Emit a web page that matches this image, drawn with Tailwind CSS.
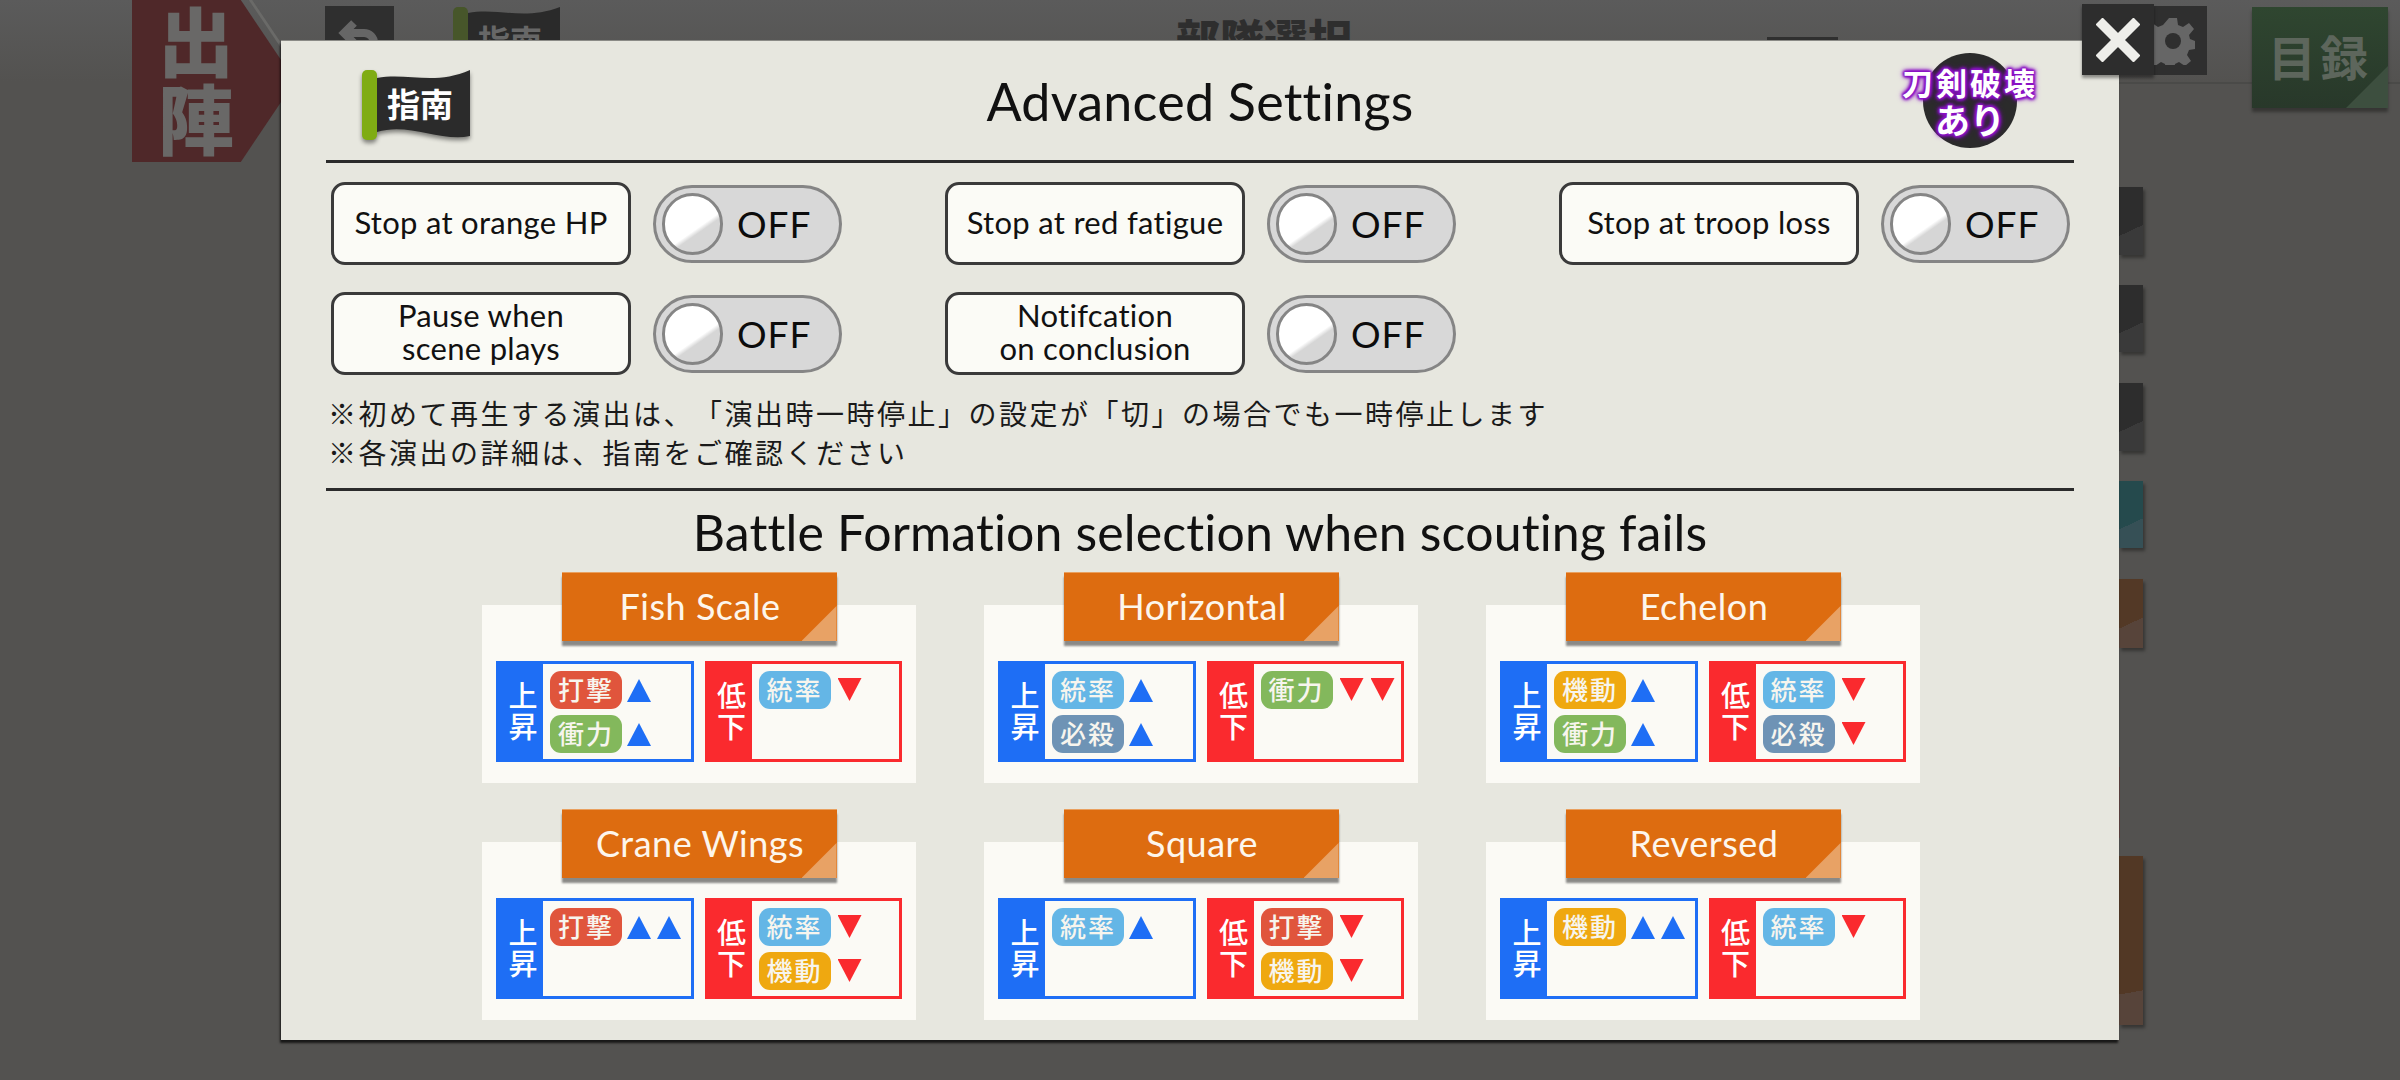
<!DOCTYPE html>
<html lang="ja">
<head>
  <meta charset="UTF-8" />
  <title>Advanced Settings</title>
  <script src="https://cdn.jsdelivr.net/npm/@tailwindcss/browser@4"></script>
</head>
<body class="bg-[#535250] font-['Lato','Noto_Sans_CJK_JP',sans-serif] overflow-hidden">
  <div class="relative w-[2400px] h-[1080px] overflow-hidden">

    <!-- dimmed screen behind the dialog -->
    <div class="h-[82px] bg-[linear-gradient(#5b5b5b,#535250)]">
      <div class="flex items-start pl-[132px]">
        <div class="relative w-[170px] h-[162px] shrink-0">
          <div class="absolute left-[8px] top-0 w-[170px] h-[162px] bg-[#6a6a68] [clip-path:polygon(64%_0,66%_0,98%_50%,96%_50%)]"></div>
          <div class="relative w-[170px] h-[162px] bg-[#4f2829] [clip-path:polygon(0_0,64%_0,96%_50%,64%_100%,0_100%)] pl-[22px] pt-[4px] text-[#696867] text-[76px] leading-[76px] tracking-[2px] font-black"><span class="block w-[76px] [writing-mode:vertical-rl]">出陣</span></div>
        </div>
        <div class="ml-[23px] mt-[6px] w-[69px] h-[69px] shrink-0 bg-[#2f2f2f] flex items-center justify-center">
          <svg width="44" height="44" viewBox="0 0 44 44" fill="none" stroke="#666" stroke-width="8"><path d="M8 14h18a10 10 0 0 1 0 20h-8"/><path d="M16 4L6 14l10 10"/></svg>
        </div>
        <div class="relative ml-[59px] mt-[7px] w-[107px] h-[72px] shrink-0">
          <svg class="block" width="107" height="72" viewBox="0 0 107 72"><rect x="0" y="0" width="15" height="70" rx="5" fill="#47562a"/><path d="M15 6C45 0 70 14 107 0V66C75 72 45 54 15 62Z" fill="#2a2a2a"/></svg>
          <span class="absolute left-[25px] top-[14px] text-[32px] leading-[40px] font-bold text-[#676767] whitespace-nowrap">指南</span>
        </div>
        <div class="ml-[616px] mt-[14px] w-[180px] shrink-0 text-[44px] leading-[52px] font-black text-[#2e2e2e] whitespace-nowrap">部隊選択</div>
        <div class="ml-[411px] mt-[37px] w-[71px] h-[30px] shrink-0 bg-[#2f2f2f]"></div>
        <div class="ml-[301px] mt-[6px] w-[68px] h-[69px] shrink-0 bg-[#2f2f2f] flex items-center justify-center">
          <svg width="44" height="48" viewBox="0 0 44 48" fill="#666"><path d="M18 1h8l1 7 5 2 6-4 5 6-5 6 1 4 5 2v8l-6 1-2 5 4 6-6 5-6-4-4 2-1 7h-8l-1-7-4-2-6 4-6-5 4-6-2-5-6-1v-8l6-2 1-4-5-6 5-6 6 4 5-2z"/><circle cx="22" cy="24" r="8" fill="#2f2f2f"/></svg>
        </div>
        <div class="relative ml-[45px] mt-[7px] w-[136px] h-[101px] shrink-0 bg-[linear-gradient(#2f4630,#28382a)] shadow-[0_4px_3px_rgba(0,0,0,0.35)] flex items-center justify-center text-[48px] leading-[56px] font-bold text-[#5d665c] tracking-[4px]">
          目録
          <div class="absolute right-0 bottom-0 w-[42px] h-[42px] bg-[#3d4f3f] [clip-path:polygon(100%_0,100%_100%,0_100%)]"></div>
        </div>
      </div>
    </div>
    <div class="ml-[2119px] h-[2px] bg-[#4a4a48]"></div>
    <div class="flex flex-col items-end pr-[257px] pt-[103px]">
      <div class="w-[24px] h-[68px] mb-[30px] bg-[linear-gradient(155deg,#2d2d2d_62%,#3a3a3a_62%)] shadow-[2px_3px_3px_rgba(0,0,0,0.35)]"></div>
      <div class="w-[24px] h-[67px] mb-[31px] bg-[linear-gradient(155deg,#2d2d2d_62%,#3a3a3a_62%)] shadow-[2px_3px_3px_rgba(0,0,0,0.35)]"></div>
      <div class="w-[24px] h-[68px] mb-[30px] bg-[linear-gradient(155deg,#2d2d2d_62%,#3a3a3a_62%)] shadow-[2px_3px_3px_rgba(0,0,0,0.35)]"></div>
      <div class="w-[24px] h-[67px] mb-[31px] bg-[linear-gradient(155deg,#254a4d_62%,#365056_62%)] shadow-[2px_3px_3px_rgba(0,0,0,0.35)]"></div>
      <div class="w-[24px] h-[69px] mb-[119px] bg-[linear-gradient(155deg,#533926_62%,#57443a_62%)] shadow-[2px_3px_3px_rgba(0,0,0,0.35)]"></div>
      <div class="mr-[23px] w-[1px] h-[71px] mb-[18px] bg-[#5c4341]"></div>
      <div class="w-[24px] h-[169px] bg-[linear-gradient(170deg,#523825_80%,#57443a_80%)] shadow-[2px_3px_3px_rgba(0,0,0,0.35)]"></div>
    </div>

    <!-- dialog -->
    <div class="absolute left-[281px] top-[40px] w-[1838px] h-[1000px] bg-[#e7e7df] shadow-[-1px_3px_2px_rgba(0,0,0,0.7)] border-t border-[#8b8b86] px-[45px]">
      <div class="relative h-[122px] border-b-[3px] border-[#2b2b2b] flex items-center justify-center">
        <div class="absolute left-[36px] top-[29px] w-[108px] h-[73px]">
          <svg class="block drop-shadow-[0_3px_2px_rgba(0,0,0,0.45)]" width="108" height="72" viewBox="0 0 108 72"><path d="M15 8C45 2 72 16 108 0V66C78 72 46 52 15 62Z" fill="#2b2b2b"/><rect x="0" y="0" width="15" height="70" rx="5" fill="#7fac14"/></svg>
          <span class="absolute left-[25px] top-[12px] text-[33px] leading-[44px] font-bold text-white whitespace-nowrap">指南</span>
        </div>
        <h1 class="text-[52px] leading-[60px] text-[#111] tracking-[0.25px]">Advanced Settings</h1>
        <div class="absolute left-[1575px] top-[12px] w-[138px] h-[95px] flex justify-center">
          <div class="w-[94px] h-[95px] rounded-full bg-[#2b2b2b]"></div>
          <div class="absolute inset-0 flex flex-col items-center justify-center text-white font-bold whitespace-nowrap [text-shadow:0_0_2px_#8a12c4,0_0_4px_#8a12c4,0_0_5px_#8a12c4,0_0_7px_#8a12c4,1px_1px_3px_#8a12c4,-1px_-1px_3px_#8a12c4,1px_-1px_3px_#8a12c4,-1px_1px_3px_#8a12c4]">
            <span class="text-[31px] leading-[38px] tracking-[3px]">刀剣破壊</span>
            <span class="text-[35px] leading-[36px]">あり</span>
          </div>
        </div>
      </div>

      <div id="settings" class="ml-[5px] mt-[19px] grid grid-cols-[repeat(3,614px)] gap-y-[27px]"></div>

      <div class="ml-[2px] mt-[20px] text-[28px] leading-[39px] tracking-[2.5px] text-[#1a1a1a] whitespace-nowrap [text-spacing-trim:space-all]">
        <p>※初めて再生する演出は、「演出時一時停止」の設定が「切」の場合でも一時停止します</p>
        <p>※各演出の詳細は、指南をご確認ください</p>
      </div>

      <div class="mt-[15px] border-b-[3px] border-[#2b2b2b]"></div>

      <h2 class="mt-[11px] h-[60px] text-center text-[50px] leading-[60px] text-[#111] tracking-[0.13px] whitespace-nowrap">Battle Formation selection when scouting fails</h2>

      <div id="formations" class="ml-[156px] mt-[10px] grid grid-cols-[repeat(3,434px)] gap-x-[68px] gap-y-[26px]"></div>
    </div>

    <!-- close button -->
    <div class="absolute left-[2082px] top-[4px] w-[72px] h-[71px] bg-[#2d2d2d] shadow-[0_3px_3px_rgba(0,0,0,0.4)] flex items-center justify-center">
      <svg width="44" height="44" viewBox="0 0 44 44" stroke="#eeeeea" stroke-width="10"><path d="M3 3L41 41M41 3L3 41"/></svg>
    </div>
  </div>

  <script>
    const settings = [
      ["Stop at orange HP"],
      ["Stop at red fatigue"],
      ["Stop at troop loss"],
      ["Pause when", "scene plays"],
      ["Notifcation", "on conclusion"],
    ];

    const statColors = {
      "打撃": "bg-[#e0553c]",
      "衝力": "bg-[#83b85c]",
      "統率": "bg-[#64b6e6]",
      "必殺": "bg-[#6e93b5]",
      "機動": "bg-[#efa810]",
    };

    const formations = [
      { name: "Fish Scale", up: [["打撃", 1], ["衝力", 1]], down: [["統率", 1]] },
      { name: "Horizontal", up: [["統率", 1], ["必殺", 1]], down: [["衝力", 2]] },
      { name: "Echelon", up: [["機動", 1], ["衝力", 1]], down: [["統率", 1], ["必殺", 1]] },
      { name: "Crane Wings", up: [["打撃", 2]], down: [["統率", 1], ["機動", 1]] },
      { name: "Square", up: [["統率", 1]], down: [["打撃", 1], ["機動", 1]] },
      { name: "Reversed", up: [["機動", 2]], down: [["統率", 1]] },
    ];

    document.getElementById("settings").innerHTML = settings.map(lines => `
      <div class="flex items-center gap-[22px]">
        <div class="w-[300px] h-[83px] pb-[3px] rounded-[14px] border-[3px] border-[#3a3a3a] bg-[#fbfbf6] flex items-center justify-center text-center text-[31px] leading-[33px] tracking-[0.3px] text-[#111] whitespace-nowrap">
          <span>${lines.join("<br>")}</span>
        </div>
        <div class="relative w-[189px] h-[78px] rounded-full border-[3px] border-[#858585] bg-[#d8d8d8] flex items-center pl-[81px] text-[37px] text-[#0c0c0c] tracking-[1px]">
          OFF
          <div class="absolute left-[6px] top-[5px] w-[61px] h-[62px] rounded-full border-[3px] border-[#858585] bg-[linear-gradient(145deg,#ffffff_58%,#d6d6d6_64%)]"></div>
        </div>
      </div>`).join("");

    function statRows(stats, arrow) {
      return stats.map(([stat, count]) => `
        <div class="flex items-start gap-[5px]">
          <span class="w-[72px] h-[38px] rounded-[11px] ${statColors[stat]} flex items-center justify-center text-[26px] leading-none tracking-[2px] font-medium text-[#f7f5ee]">${stat}</span>
          ${arrow.repeat(count)}
        </div>`).join("");
    }

    const upArrow = `<span class="w-[24px] h-[23px] mt-[8px] mr-[1px] bg-[#1e6ef5] [clip-path:polygon(50%_0,100%_100%,0_100%)]"></span>`;
    const downArrow = `<span class="w-[24px] h-[23px] mt-[7px] ml-[2px] bg-[#fa2a2e] [clip-path:polygon(0_0,100%_0,50%_100%)]"></span>`;

    document.getElementById("formations").innerHTML = formations.map(f => `
      <div>
        <div class="relative z-10 mx-auto w-[275px] h-[69px] bg-[#dd6c10] border-t border-[#e9a05f] shadow-[0_5px_2px_rgba(0,0,0,0.45)] flex items-center justify-center pb-[2px] pl-[2px] text-[36px] text-[#fdf6ec] tracking-[0.5px]">
          ${f.name}
          <div class="absolute right-0 bottom-0 w-[35px] h-[35px] bg-[#e8a265] [clip-path:polygon(100%_0,100%_100%,0_100%)]"></div>
        </div>
        <div class="-mt-[36px] h-[178px] bg-[#fbfaf5] pt-[56px] px-[14px] flex gap-[11px]">
          <div class="w-[199px] h-[101px] border-[3px] border-[#1e6ef5] flex">
            <div class="w-[44px] bg-[#1e6ef5] flex items-center justify-center text-[29px] leading-[44px] tracking-[2px] font-medium text-white"><span class="[writing-mode:vertical-rl]">上昇</span></div>
            <div class="pl-[7px] pt-[7px] flex flex-col gap-[6px]">${statRows(f.up, upArrow)}</div>
          </div>
          <div class="w-[199px] h-[101px] border-[3px] border-[#fa2a2e] flex">
            <div class="w-[44px] bg-[#fa2a2e] flex items-center justify-center text-[29px] leading-[44px] tracking-[2px] font-medium text-white"><span class="[writing-mode:vertical-rl]">低下</span></div>
            <div class="pl-[7px] pt-[7px] flex flex-col gap-[6px]">${statRows(f.down, downArrow)}</div>
          </div>
        </div>
      </div>`).join("");
  </script>
</body>
</html>
